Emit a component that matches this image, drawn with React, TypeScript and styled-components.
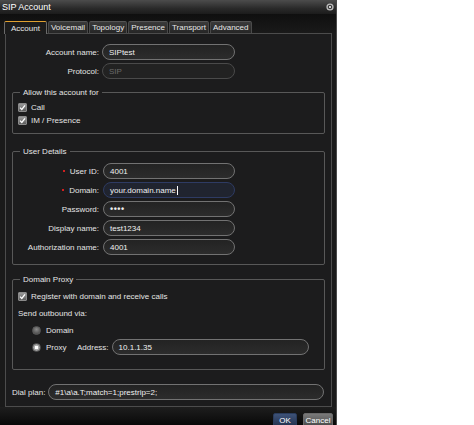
import styled, { createGlobalStyle } from 'styled-components';

const GlobalStyle = createGlobalStyle`
  html, body {
    margin: 0;
    padding: 0;
    background: #ffffff;
  }
  body {
    font-family: "Liberation Sans", Arial, sans-serif;
  }
`;

const Window = styled.div`
  width: 337px;
  height: 425px;
  box-sizing: border-box;
  display: flex;
  flex-direction: column;
  overflow: hidden;
  background: linear-gradient(#080808, #1a1a1a 34px, #1a1a1a);
  border-right: 1px solid #4a4a4a;
  font-size: 8px;
  color: #e4e4e4;
`;

const TitleBar = styled.div`
  height: 14px;
  flex: none;
  display: flex;
  align-items: center;
  justify-content: space-between;
  padding: 0 2px 0 2px;
  background: linear-gradient(#4c4c4c, #2a2a2a 60%, #1c1c1c);
  color: #ffffff;
  font-size: 9px;
`;

const CloseIcon = () => (
  <svg width="8" height="8" viewBox="0 0 8 8">
    <circle cx="4" cy="4" r="3.6" fill="#bdbdbd" />
    <circle cx="4" cy="4" r="2.3" fill="#3a3a3a" />
    <path d="M2.9 2.9 L5.1 5.1 M5.1 2.9 L2.9 5.1" stroke="#e0e0e0" strokeWidth="0.9" />
  </svg>
);

const TabBar = styled.div`
  display: flex;
  gap: 1px;
  padding: 7px 0 0 4px;
  height: 12px;
  flex: none;
`;

const Tab = styled.div<{ $active?: boolean }>`
  box-sizing: border-box;
  display: flex;
  align-items: center;
  padding: 0 ${(p) => (p.$active ? '6px' : '2px')};
  border: 1px solid ${(p) => (p.$active ? '#6a6a6a' : '#4a4a4a')};
  border-bottom: none;
  border-top: ${(p) => (p.$active ? '1px solid #e0a030' : '1px solid #555')};
  border-radius: 2px 2px 0 0;
  background: ${(p) =>
    p.$active ? '#1c1c1c' : 'linear-gradient(#3a3a3a, #262626)'};
  color: #e8e8e8;
  position: relative;
  z-index: ${(p) => (p.$active ? 1 : 0)};
  margin-bottom: ${(p) => (p.$active ? '-1px' : '0')};
  height: ${(p) => (p.$active ? '13px' : '12px')};
`;

const Panel = styled.div`
  margin-left: 5px;
  width: 327px;
  height: 374px;
  box-sizing: border-box;
  flex: none;
  border: 1px solid #4c4c4c;
  background: #1c1c1d;
  padding: 10px 6px 0 0;
`;

const Row = styled.div<{ $labelWidth: number; $gap?: number }>`
  display: flex;
  align-items: center;
  height: 16px;
  gap: ${(p) => p.$gap ?? 3}px;
  margin-bottom: 3px;

  & > label {
    width: ${(p) => p.$labelWidth}px;
    flex: none;
    text-align: right;
  }
`;

const Required = styled.span`
  display: inline-block;
  width: 2px;
  height: 2px;
  background: #d02020;
  margin-right: 5px;
  vertical-align: middle;
`;

const Input = styled.div<{ $width: number; $disabled?: boolean; $focused?: boolean }>`
  width: ${(p) => p.$width}px;
  height: 16px;
  box-sizing: border-box;
  border-radius: 8px;
  border: 1px solid ${(p) => (p.$focused ? '#2e3b63' : p.$disabled ? '#4a4a4a' : '#727272')};
  background: ${(p) =>
    p.$focused ? '#20242f' : p.$disabled ? '#222222' : 'linear-gradient(#232323, #2c2c2c)'};
  color: ${(p) => (p.$disabled ? '#6a6a6a' : '#f0f0f0')};
  display: flex;
  align-items: center;
  padding-left: 6px;
  white-space: nowrap;
`;

const Caret = styled.span`
  display: inline-block;
  width: 1px;
  height: 9px;
  background: #ffffff;
  margin-left: 1px;
`;

const Dots = styled.span`
  font-size: 9px;
  font-weight: bold;
  letter-spacing: 0.5px;
`;

const Group = styled.fieldset<{ $top: number; $bottom: number }>`
  margin: ${(p) => p.$top}px 0 0 6px;
  width: 313px;
  box-sizing: border-box;
  border: 1px solid #585858;
  border-radius: 2px;
  padding: 0 0 ${(p) => p.$bottom}px 5px;

  & > legend {
    padding: 0 3px;
    margin-left: 2px;
    line-height: 9px;
    color: #e4e4e4;
  }
`;

const GroupBody = styled.div<{ $top: number }>`
  padding-top: ${(p) => p.$top}px;
  display: flex;
  flex-direction: column;
`;

const CheckRow = styled.div<{ $gap?: number }>`
  display: flex;
  align-items: center;
  gap: 4px;
  height: 9px;
  margin-bottom: ${(p) => p.$gap ?? 0}px;
`;

const Box = styled.span`
  width: 9px;
  height: 9px;
  box-sizing: border-box;
  border: 1px solid #8a8a8a;
  border-radius: 1px;
  background: linear-gradient(#9a9a9a, #5c5c5c);
  display: flex;
  align-items: center;
  justify-content: center;
`;

const Check = () => (
  <Box>
    <svg width="7" height="7" viewBox="0 0 7 7">
      <path d="M1 3.6 L2.8 5.4 L6 1.3" fill="none" stroke="#ffffff" strokeWidth="1.3" />
    </svg>
  </Box>
);

const Note = styled.div`
  height: 9px;
  line-height: 9px;
  margin: 8px 0 0 0;
`;

const RadioRow = styled.div<{ $mt: number }>`
  display: flex;
  align-items: center;
  height: 16px;
  margin: ${(p) => p.$mt}px 0 0 14px;
`;

const RadioDot = styled.span<{ $on?: boolean }>`
  width: 9px;
  height: 9px;
  border-radius: 50%;
  flex: none;
  margin-right: 5px;
  box-sizing: border-box;
  border: 1px solid #5a5a5a;
  background: ${(p) =>
    p.$on
      ? 'radial-gradient(circle, #ffffff 0 1.6px, #b0b0b0 2px, #777 100%)'
      : 'radial-gradient(circle at 50% 35%, #8a8a8a, #3e3e3e)'};
`;

const RadioLabel = styled.span`
  width: 31px;
`;

const AddressLabel = styled.span`
  margin-right: 3px;
`;

const DialRow = styled.div`
  display: flex;
  align-items: center;
  gap: 3px;
  height: 16px;
  margin: 14px 0 0 6px;
`;

const Footer = styled.div`
  flex: 1;
  display: flex;
  justify-content: flex-end;
  align-items: flex-start;
  gap: 6px;
  padding: 6px 3px 0 0;
  background: linear-gradient(#1e1e1e, #060606);
`;

const Button = styled.div<{ $primary?: boolean }>`
  height: 14px;
  box-sizing: border-box;
  width: ${(p) => (p.$primary ? '24px' : '30px')};
  display: flex;
  align-items: center;
  justify-content: center;
  border-radius: 2px;
  border: 1px solid ${(p) => (p.$primary ? '#2a3c5c' : '#6a6a6a')};
  background: ${(p) =>
    p.$primary
      ? 'linear-gradient(#3d5278, #24324e)'
      : 'linear-gradient(#7a7a7a, #4a4a4a)'};
  color: #ffffff;
  font-size: 8px;
`;

export default function App() {
  return (
    <>
      <GlobalStyle />
      <Window>
        <TitleBar>
          <span>SIP Account</span>
          <CloseIcon />
        </TitleBar>
        <TabBar>
          <Tab $active>Account</Tab>
          <Tab>Voicemail</Tab>
          <Tab>Topology</Tab>
          <Tab>Presence</Tab>
          <Tab>Transport</Tab>
          <Tab>Advanced</Tab>
        </TabBar>
        <Panel>
          <Row $labelWidth={93}>
            <label>Account name:</label>
            <Input $width={133}>SIPtest</Input>
          </Row>
          <Row $labelWidth={93}>
            <label>Protocol:</label>
            <Input $width={133} $disabled>
              SIP
            </Input>
          </Row>

          <Group $top={9} $bottom={8}>
            <legend>Allow this account for</legend>
            <GroupBody $top={6}>
              <CheckRow $gap={4}>
                <Check />
                <span>Call</span>
              </CheckRow>
              <CheckRow>
                <Check />
                <span>IM / Presence</span>
              </CheckRow>
            </GroupBody>
          </Group>

          <Group $top={13} $bottom={6}>
            <legend>User Details</legend>
            <GroupBody $top={7}>
              <Row $labelWidth={81} $gap={4}>
                <label>
                  <Required />
                  User ID:
                </label>
                <Input $width={132}>4001</Input>
              </Row>
              <Row $labelWidth={81} $gap={4}>
                <label>
                  <Required />
                  Domain:
                </label>
                <Input $width={132} $focused>
                  your.domain.name
                  <Caret />
                </Input>
              </Row>
              <Row $labelWidth={81} $gap={4}>
                <label>Password:</label>
                <Input $width={132}>
                  <Dots>••••</Dots>
                </Input>
              </Row>
              <Row $labelWidth={81} $gap={4}>
                <label>Display name:</label>
                <Input $width={132}>test1234</Input>
              </Row>
              <Row $labelWidth={81} $gap={4}>
                <label>Authorization name:</label>
                <Input $width={132}>4001</Input>
              </Row>
            </GroupBody>
          </Group>

          <Group $top={10} $bottom={14}>
            <legend>Domain Proxy</legend>
            <GroupBody $top={8}>
              <CheckRow>
                <Check />
                <span>Register with domain and receive calls</span>
              </CheckRow>
              <Note>Send outbound via:</Note>
              <RadioRow $mt={4}>
                <RadioDot />
                <RadioLabel>Domain</RadioLabel>
              </RadioRow>
              <RadioRow $mt={1}>
                <RadioDot $on />
                <RadioLabel>Proxy</RadioLabel>
                <AddressLabel>Address:</AddressLabel>
                <Input $width={197}>10.1.1.35</Input>
              </RadioRow>
            </GroupBody>
          </Group>

          <DialRow>
            <span>Dial plan:</span>
            <Input $width={276}>#1\a\a.T;match=1;prestrip=2;</Input>
          </DialRow>
        </Panel>
        <Footer>
          <Button $primary>OK</Button>
          <Button>Cancel</Button>
        </Footer>
      </Window>
    </>
  );
}
